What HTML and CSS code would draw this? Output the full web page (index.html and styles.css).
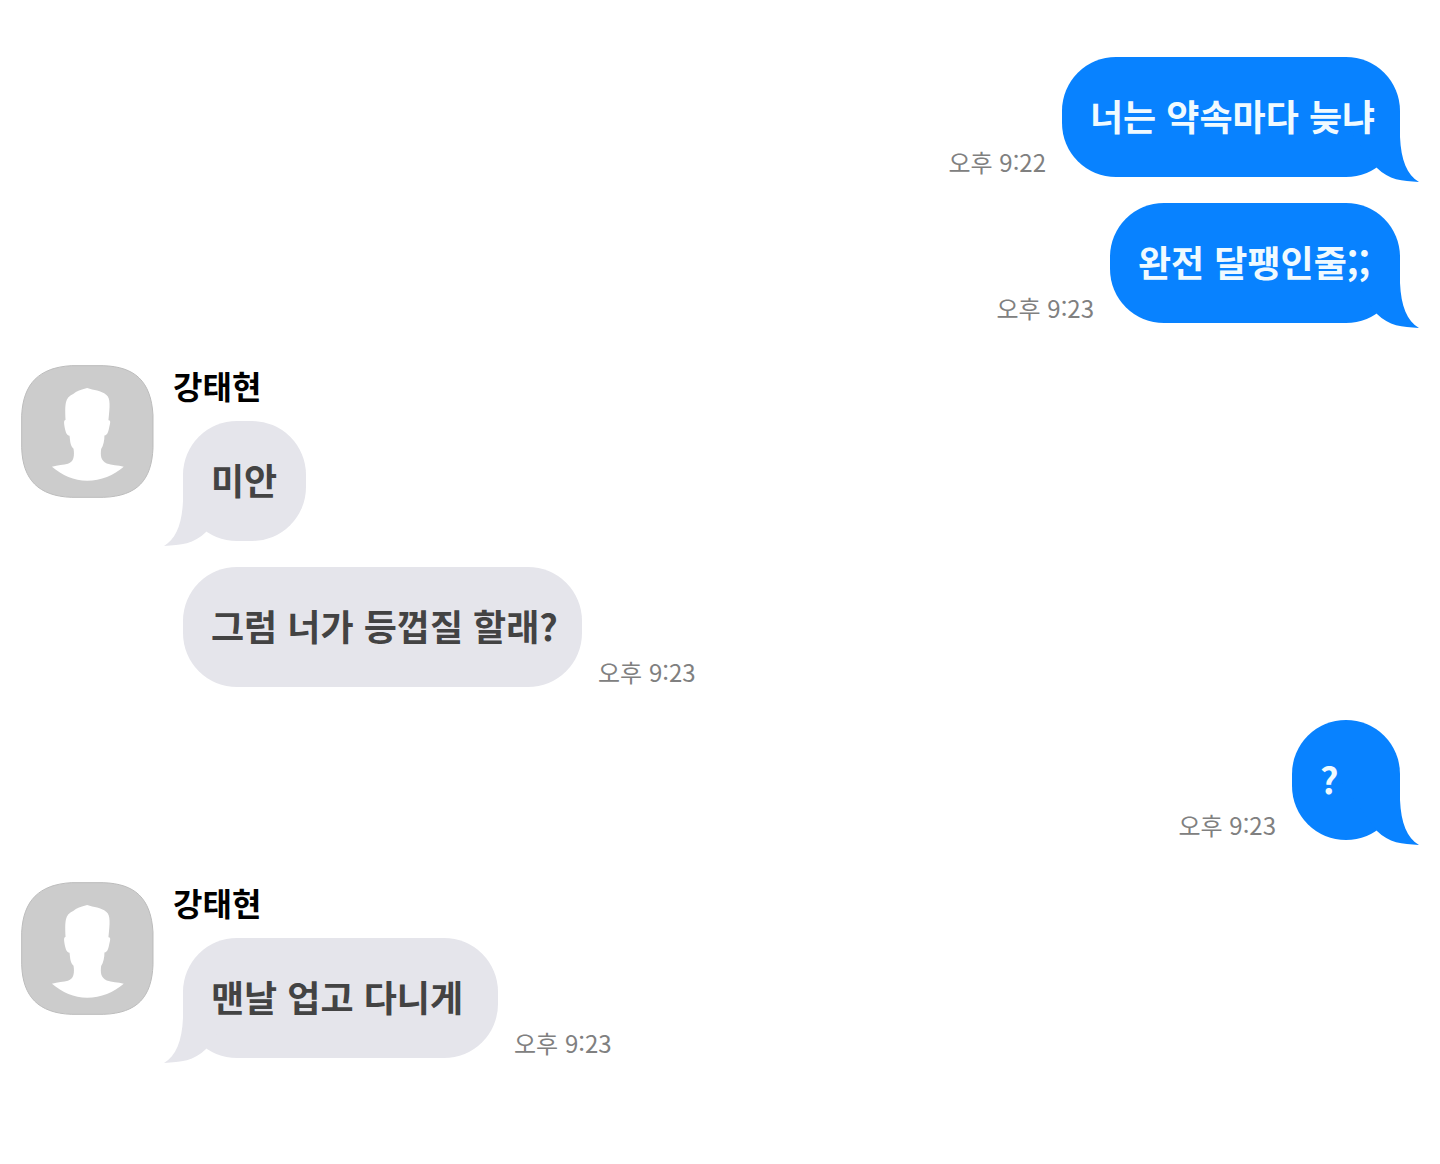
FILE: index.html
```html
<!DOCTYPE html>
<html lang="ko">
<head>
<meta charset="utf-8">
<meta name="viewport" content="width=device-width, initial-scale=1">
<title>강태현</title>
<link rel="stylesheet" href="styles.css">
</head>
<body>
<svg class="symbols" aria-hidden="true">
  <symbol id="tail" viewBox="0 0 79 65">
    <path d="M0 0H60V20C61 43 67 58 79 65C62 64 49 63 37 51Z"/>
  </symbol>
  <symbol id="person" viewBox="33 29 400 400">
    <path d="M184 31H280C375 34 424 77 430 180V278C426 374 384 423 282 427H184C86 423 38 374 35 278V180C40 84 88 37 184 31Z" fill="#cccccc" stroke="#bcbcbc" stroke-width="3"/>
    <path d="M232 98C213 103 200 107 190 116C165 127 165 146 167 194C160 196 163 208 165 220C168 233 170 240 179 242C181 258 181 273 191 281C194 300 193 321 174 326C162 330 143 330 126 335C157 361 192 377 232 377C274 377 312 361 342 335C325 330 305 330 291 325C272 317 272 300 274 282C281 271 284 256 284 241C294 239 296 228 299 213C302 202 303 195 296 195C300 155 303 130 290 119C273 104 252 106 232 98Z" fill="#ffffff"/>
  </symbol>
</svg>
<main class="chat">
  <section class="sent">
    <div class="message">
      <p class="bubble bubble-blue size-l">너는 약속마다 늦냐<svg class="tail" aria-hidden="true"><use href="#tail"/></svg></p>
      <time class="time" datetime="21:22">오후 9:22</time>
    </div>
    <div class="message">
      <p class="bubble bubble-blue size-m">완전 달팽인줄;;<svg class="tail" aria-hidden="true"><use href="#tail"/></svg></p>
      <time class="time" datetime="21:23">오후 9:23</time>
    </div>
  </section>

  <section class="received">
    <svg class="avatar" role="img" aria-label="강태현"><use href="#person"/></svg>
    <div class="body">
      <h2 class="name">강태현</h2>
      <div class="messages">
        <div class="message">
          <p class="bubble bubble-gray size-s">미안<svg class="tail" aria-hidden="true"><use href="#tail"/></svg></p>
        </div>
        <div class="message">
          <p class="bubble bubble-gray size-xl">그럼 너가 등껍질 할래?</p>
          <time class="time" datetime="21:23">오후 9:23</time>
        </div>
      </div>
    </div>
  </section>

  <section class="sent">
    <div class="message">
      <p class="bubble bubble-blue">?<svg class="tail" aria-hidden="true"><use href="#tail"/></svg></p>
      <time class="time" datetime="21:23">오후 9:23</time>
    </div>
  </section>

  <section class="received">
    <svg class="avatar" role="img" aria-label="강태현"><use href="#person"/></svg>
    <div class="body">
      <h2 class="name">강태현</h2>
      <div class="messages">
        <div class="message">
          <p class="bubble bubble-gray size-ml">맨날 업고 다니게<svg class="tail" aria-hidden="true"><use href="#tail"/></svg></p>
          <time class="time" datetime="21:23">오후 9:23</time>
        </div>
      </div>
    </div>
  </section>
</main>
</body>
</html>
```

FILE: styles.css
```css
* {
  box-sizing: border-box;
}

body {
  margin: 0;
  background: #ffffff;
  font-family: "Noto Sans CJK KR", sans-serif;
}

.symbols {
  display: block;
  width: 0;
  height: 0;
}

.chat {
  display: flex;
  flex-direction: column;
  padding: 57px 40px 72px 21px;
}

.sent,
.messages {
  display: flex;
  flex-direction: column;
  gap: 26px;
}

.message {
  display: flex;
  align-items: flex-end;
  gap: 16px;
}

.sent .message {
  flex-direction: row-reverse;
}

.received {
  display: flex;
  align-items: flex-start;
  gap: 19px;
  padding: 42px 0 33px;
}

.avatar {
  flex: none;
  width: 133px;
  height: 133px;
}

.name {
  margin: 0;
  padding-bottom: 16px;
  color: #000000;
  font-size: 32px;
  font-weight: 700;
  line-height: 40px;
}

.messages {
  padding-left: 10px;
}

.bubble {
  position: relative;
  isolation: isolate;
  min-width: 108px;
  margin: 0;
  padding: 30px 24px 34px 28px;
  border-radius: 54px;
  font-size: 36px;
  font-weight: 700;
  line-height: 56px;
}

.bubble-blue {
  background: #0882ff;
  color: #f0faff;
}

.bubble-gray {
  background: #e5e5eb;
  color: #434343;
}

.size-s {
  min-width: 123px;
}

.size-m {
  min-width: 290px;
}

.size-ml {
  min-width: 315px;
}

.size-l {
  min-width: 338px;
}

.size-xl {
  min-width: 399px;
}

/* Sits between the bubble's background and its text */
.tail {
  position: absolute;
  z-index: -1;
  bottom: -5px;
  width: 79px;
  height: 65px;
}

.bubble-blue .tail {
  right: -19px;
  fill: #0882ff;
}

.bubble-gray .tail {
  left: -19px;
  fill: #e5e5eb;
  transform: scaleX(-1);
}

.time {
  color: #808080;
  font-size: 24px;
  line-height: 30px;
  white-space: nowrap;
}
```
